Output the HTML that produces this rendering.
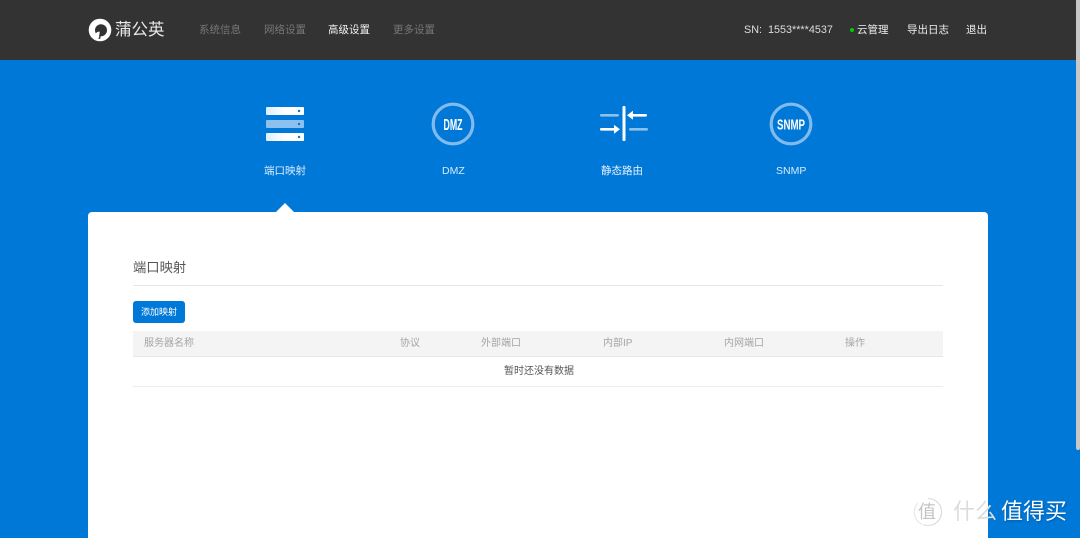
<!DOCTYPE html>
<html lang="zh">
<head>
<meta charset="utf-8">
<style>
html,body{margin:0;padding:0;width:1080px;height:538px;overflow:hidden;background:#0078d8;}
body{position:relative;font-family:"Liberation Sans","Noto Sans CJK SC",sans-serif;}
.t{position:absolute;white-space:nowrap;line-height:14px;font-size:10.5px;}
.hdr{position:absolute;left:0;top:0;width:1080px;height:60px;background:#333;}
.card{position:absolute;left:88px;top:212px;width:900px;height:340px;background:#fff;border-radius:4px;}
.abs{position:absolute;}
</style>
</head>
<body>
<div class="hdr"></div>

<svg class="abs" style="left:88px;top:18px" width="24" height="24" viewBox="0 0 24 24">
  <circle cx="12" cy="12" r="11.3" fill="#fff"/>
  <circle cx="13" cy="12.2" r="6" fill="#333"/>
  <path d="M7 17c.8-2.2 2.2-3.4 4.6-3.4.2 1.8-.2 3.6-1 5.2-1.4.2-2.8-.6-3.6-1.8z" fill="#fff"/>
  <path d="M11.4 18l-1 3 1.8-.1.6-3z" fill="#333"/>
</svg>
<div class="t" style="left:115px;top:20px;font-size:16.5px;line-height:20px;color:#e8e8e8;">蒲公英</div>

<div class="t" style="left:199px;top:23px;color:#777;">系统信息</div>
<div class="t" style="left:264px;top:23px;color:#777;">网络设置</div>
<div class="t" style="left:328px;top:23px;color:#f0f0f0;">高级设置</div>
<div class="t" style="left:393px;top:23px;color:#777;">更多设置</div>

<div class="t" style="left:744px;top:23px;color:#ddd;font-size:10.8px;">SN:&nbsp;&nbsp;1553****4537</div>
<div class="abs" style="left:850px;top:28px;width:4px;height:4px;border-radius:50%;background:#0c0;"></div>
<div class="t" style="left:857px;top:23px;color:#eee;">云管理</div>
<div class="t" style="left:907px;top:23px;color:#eee;">导出日志</div>
<div class="t" style="left:966px;top:23px;color:#eee;">退出</div>

<!-- port mapping icon -->
<svg class="abs" style="left:264px;top:105px" width="42" height="38" viewBox="0 0 42 38">
  <defs>
    <linearGradient id="g" x1="0" y1="0" x2="1" y2="0">
      <stop offset="0" stop-color="#dceeff"/>
      <stop offset="0.5" stop-color="#fff"/>
      <stop offset="1" stop-color="#fff"/>
    </linearGradient>
  </defs>
  <rect x="2" y="2" width="38" height="8" rx="1" fill="url(#g)"/>
  <rect x="2" y="15" width="38" height="8" rx="1" fill="#8cc0ef"/>
  <rect x="2" y="28" width="38" height="8" rx="1" fill="url(#g)"/>
  <circle cx="35" cy="6" r="1.2" fill="#0078d8"/>
  <circle cx="35" cy="19" r="1.2" fill="#0078d8"/>
  <circle cx="35" cy="32" r="1.2" fill="#0078d8"/>
</svg>
<div class="t" style="left:264px;top:164px;color:#d8ebfb;">端口映射</div>

<!-- DMZ icon -->
<svg class="abs" style="left:431px;top:102px" width="44" height="44" viewBox="0 0 44 44">
  <circle cx="22" cy="22" r="19.8" fill="none" stroke="#80bbee" stroke-width="3.2"/>
  <text x="22" y="28" text-anchor="middle" font-family="Liberation Sans Narrow,Liberation Sans,sans-serif" font-size="16" font-weight="700" fill="#fff" textLength="19" lengthAdjust="spacingAndGlyphs">DMZ</text>
</svg>
<div class="t" style="left:442px;top:164px;color:#d8ebfb;">DMZ</div>

<!-- static route icon -->
<svg class="abs" style="left:598px;top:104px" width="50" height="40" viewBox="0 0 50 40">
  <rect x="24.5" y="2" width="3" height="35" rx="1" fill="#fff"/>
  <rect x="2" y="10" width="19" height="2.6" rx="1.3" fill="#8cc0ef"/>
  <rect x="31" y="24" width="19" height="2.6" rx="1.3" fill="#8cc0ef"/>
  <rect x="2" y="24" width="16" height="2.6" rx="1.3" fill="#fff"/>
  <path d="M22 25.3l-6-4.5v9z" fill="#fff"/>
  <rect x="33" y="10" width="16" height="2.6" rx="1.3" fill="#fff"/>
  <path d="M29 11.3l6-4.5v9z" fill="#fff"/>
</svg>
<div class="t" style="left:601px;top:164px;color:#e8f3fd;">静态路由</div>

<!-- SNMP icon -->
<svg class="abs" style="left:769px;top:102px" width="44" height="44" viewBox="0 0 44 44">
  <circle cx="22" cy="22" r="19.8" fill="none" stroke="#80bbee" stroke-width="3.2"/>
  <text x="22" y="27.5" text-anchor="middle" font-family="Liberation Sans Narrow,Liberation Sans,sans-serif" font-size="15" font-weight="700" fill="#fff" textLength="28" lengthAdjust="spacingAndGlyphs">SNMP</text>
</svg>
<div class="t" style="left:776px;top:164px;color:#d8ebfb;">SNMP</div>

<!-- card -->
<div class="card"></div>
<div class="abs" style="left:276px;top:203px;width:0;height:0;border-left:9px solid transparent;border-right:9px solid transparent;border-bottom:9px solid #fff;"></div>

<div class="t" style="left:133px;top:260px;font-size:13.3px;line-height:16px;color:#555;">端口映射</div>
<div class="abs" style="left:133px;top:285px;width:810px;height:1px;background:#e6e6e6;"></div>

<div class="abs" style="left:133px;top:301px;width:52px;height:22px;background:#0078d8;border-radius:3px;"></div>
<div class="t" style="left:141px;top:305px;font-size:9px;color:#fff;">添加映射</div>

<div class="abs" style="left:133px;top:331px;width:810px;height:25px;background:#f4f4f4;border-bottom:1px solid #e8e8e8;"></div>
<div class="t" style="left:144px;top:337px;font-size:10px;color:#a5a5a5;">服务器名称</div>
<div class="t" style="left:400px;top:337px;font-size:10px;color:#a5a5a5;">协议</div>
<div class="t" style="left:481px;top:337px;font-size:10px;color:#a5a5a5;">外部端口</div>
<div class="t" style="left:603px;top:337px;font-size:10px;color:#a5a5a5;">内部IP</div>
<div class="t" style="left:724px;top:337px;font-size:10px;color:#a5a5a5;">内网端口</div>
<div class="t" style="left:845px;top:337px;font-size:10px;color:#a5a5a5;">操作</div>

<div class="t" style="left:504px;top:365px;font-size:10px;color:#555;">暂时还没有数据</div>
<div class="abs" style="left:133px;top:386px;width:810px;height:1px;background:#ececec;"></div>

<!-- scrollbar -->
<div class="abs" style="left:1076px;top:0;width:4px;height:450px;background:#c8c8c8;border-radius:0 0 2px 2px;"></div>

<!-- watermark -->
<svg class="abs" style="left:912px;top:496px" width="32" height="32" viewBox="0 0 32 32">
  <path d="M16 2.5a13.5 13.5 0 1 1-5 26" fill="none" stroke="#ddd" stroke-width="1.2"/>
  <path d="M10 28.5A13.5 13.5 0 0 1 6 7" fill="none" stroke="#e8e8e8" stroke-width="1.2"/>
  <text x="15" y="22" text-anchor="middle" font-family="Liberation Sans,Noto Sans CJK SC,sans-serif" font-size="18" fill="#c4c4c4">值</text>
</svg>
<div class="t" style="left:953px;top:497px;font-size:22px;line-height:30px;color:#dcdcdc;">什么</div>
<div class="t" style="left:1001px;top:497px;font-size:22px;line-height:30px;color:#fff;text-shadow:1px 1px 2px rgba(0,0,0,.25);">值得买</div>
</body>
</html>
